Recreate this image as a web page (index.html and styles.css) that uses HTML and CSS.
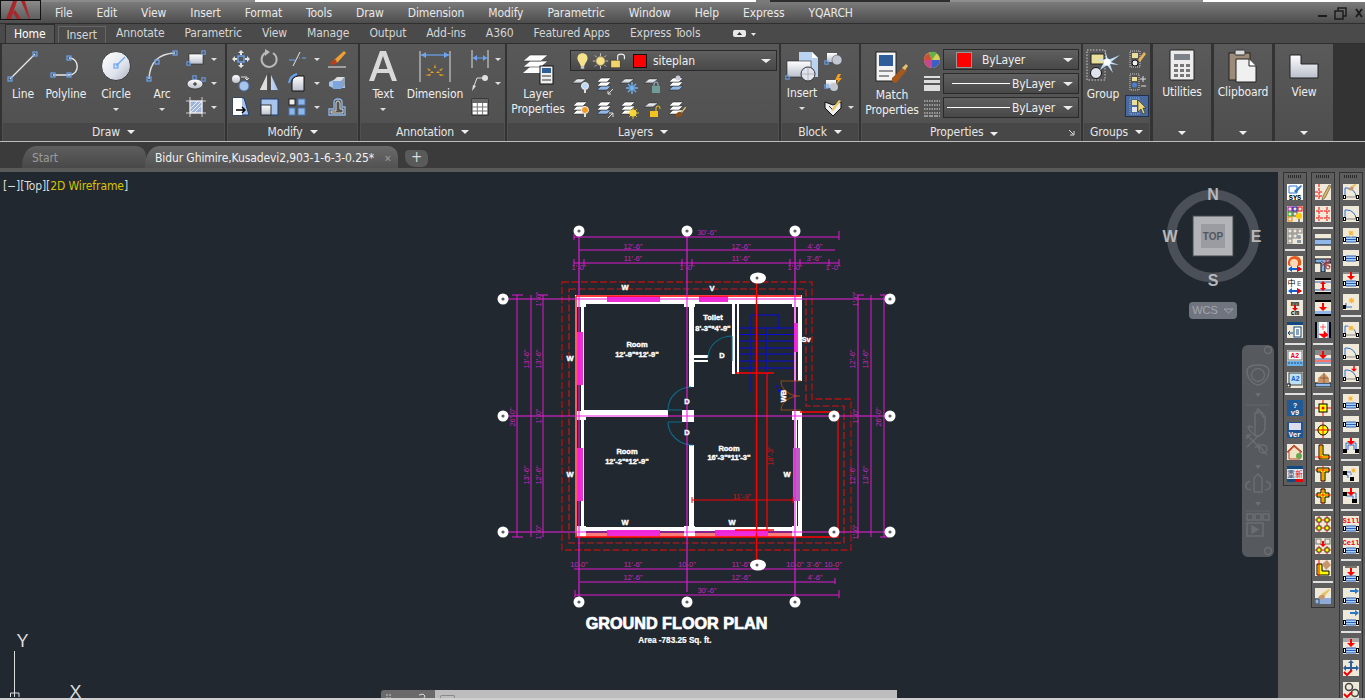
FILE: index.html
```html
<!DOCTYPE html>
<html lang="en">
<head>
<meta charset="utf-8">
<title>AutoCAD - Ground Floor Plan</title>
<link rel="stylesheet" href="styles.css">
</head>
<body>
<svg class="defs" aria-hidden="true">
  <defs>
    <linearGradient id="gw" x1="0" y1="0" x2="0" y2="1"><stop offset="0" stop-color="#fff"/><stop offset="1" stop-color="#b9bfcb"/></linearGradient>
    <linearGradient id="gc" x1="0" y1="0" x2="1" y2="1"><stop offset="0" stop-color="#fff"/><stop offset=".6" stop-color="#dfe3ec"/><stop offset="1" stop-color="#aab0bf"/></linearGradient>
    <linearGradient id="gb" x1="0" y1="0" x2="1" y2="0"><stop offset="0" stop-color="#fff"/><stop offset="1" stop-color="#9fc0ea"/></linearGradient>
  </defs>
  <symbol id="h" viewBox="0 0 6 6" overflow="visible"><rect x="1" y="1" width="4" height="4" fill="none" stroke="#6aa5f5" stroke-width="1.2"/></symbol>
  <symbol id="sheet" viewBox="0 0 20 20" overflow="visible"><polygon points="1,8 6,4 15,4 10,8" fill="url(#gw)" stroke="#222" stroke-width=".5"/></symbol>
  <symbol id="stack" viewBox="0 0 20 20" overflow="visible"><polygon points="2,15 6,11 16,11 12,15" fill="#fff" stroke="#222" stroke-width=".5"/><polygon points="2,11 6,7 16,7 12,11" fill="#fff" stroke="#222" stroke-width=".5"/><polygon points="2,7 6,3 16,3 12,7" fill="#fff" stroke="#222" stroke-width=".5"/></symbol>
  <symbol id="stackb" viewBox="0 0 20 20" overflow="visible"><polygon points="2,15 6,11 16,11 12,15" fill="#8fb7e8" stroke="#222" stroke-width=".5"/><polygon points="2,11 6,7 16,7 12,11" fill="#fff" stroke="#222" stroke-width=".5"/><polygon points="2,7 6,3 16,3 12,7" fill="#fff" stroke="#222" stroke-width=".5"/></symbol>
  <symbol id="brush" viewBox="0 0 16 16" overflow="visible"><path d="M9 8 14 2l1 1-5 6z" fill="#e9c46a"/><path d="M3 13c0-3 3-6 6-5l2 2c0 3-4 5-8 3z" fill="#8a4f1d"/></symbol>
  <symbol id="bub" viewBox="-7 -7 14 14" overflow="visible"><circle r="6.2" fill="#fff"/><circle r="1.8" fill="#5a5f66"/></symbol>
  <symbol id="winb" viewBox="0 0 16 16"><rect x="3" y="6" width="10" height="5" fill="#a9d0f5"/><path d="M3 6h10M3 8.5h10M3 11h10" stroke="#2c5fb3"/><rect x="0" y="6" width="3" height="5" fill="#000"/><rect x="13" y="6" width="3" height="5" fill="#000"/><rect x="1" y="7" width="1" height="3" fill="#fff"/><rect x="14" y="7" width="1" height="3" fill="#fff"/></symbol>
  <symbol id="doorb" viewBox="0 0 16 16"><path d="M2 13V4h2a9 9 0 0 1 9 9" fill="none" stroke="#2c6fd1"/><path d="M3 13h10" stroke="#888"/><rect x="0" y="11" width="3" height="4" fill="#000"/><rect x="13" y="11" width="3" height="4" fill="#000"/><rect x="1" y="12" width="1" height="2" fill="#fff"/><rect x="14" y="12" width="1" height="2" fill="#fff"/></symbol>
  <symbol id="star" viewBox="0 0 16 16"><path d="M8 1l1 4 4-2-2 4 4 1-4 1 2 4-4-2-1 4-1-4-4 2 2-4-4-1 4-1-2-4 4 2z" fill="#f6b73c" stroke="#fff" stroke-width=".6"/></symbol>
  <symbol id="rdown" viewBox="0 0 16 16"><path d="M7 1h2v4h3L8 9 4 5h3z" fill="#f00"/></symbol>
  <symbol id="rcross" viewBox="0 0 16 16"><path d="M8 0v16M0 8h16" stroke="#f00"/></symbol>
  <symbol id="brt" viewBox="0 0 16 16"><path d="M6 6 14 1l1 1-6 7z" fill="#e6c468"/><path d="M3 10c1-3 4-4 6-3l1 2c-1 3-5 3-7 1z" fill="#c9956b"/></symbol>
</svg>

<div class="topstrip"><span class="s1"></span><span class="s2"></span><span class="s3"></span><span class="s4"></span><span class="s5"></span></div>

<header class="menubar">
  <div class="appbtn"><svg viewBox="0 0 40 18" width="40" height="18"><path d="M5 18 12 0h4L10 18zM28 18 20 0h4l5 18zM14 9l6 9h-4l-4-6z" fill="#a8272b"/></svg></div>
  <nav class="menu">
    <span>File</span><span>Edit</span><span>View</span><span>Insert</span><span>Format</span><span>Tools</span><span>Draw</span><span>Dimension</span><span>Modify</span><span>Parametric</span><span>Window</span><span>Help</span><span>Express</span><span>YQARCH</span>
  </nav>
  <div class="winctl">
    <svg width="48" height="14" viewBox="0 0 48 14"><path d="M0 10h9" stroke="#1c1c1c" stroke-width="2"/><path d="M17 5h8v8h-8zM20 5V2h8v8h-3" fill="none" stroke="#1c1c1c" stroke-width="1.5"/><path d="M38 3l6 8M44 3l-6 8" stroke="#1c1c1c" stroke-width="2"/></svg>
  </div>
</header>

<div class="tabrow">
  <span class="rtab active">Home</span>
  <span class="rtab boxed">Insert</span>
  <span class="rtab">Annotate</span>
  <span class="rtab">Parametric</span>
  <span class="rtab">View</span>
  <span class="rtab">Manage</span>
  <span class="rtab">Output</span>
  <span class="rtab">Add-ins</span>
  <span class="rtab">A360</span>
  <span class="rtab">Featured Apps</span>
  <span class="rtab">Express Tools</span>
  <span class="tabmin"><svg width="24" height="8" viewBox="0 0 24 8"><rect x="0" y="0" width="13" height="7" rx="2" fill="#e8e8e8"/><path d="M4 5l2.500-3 2.500 3z" fill="#333"/><path d="M18 3h5l-2.500 3z" fill="#e8e8e8"/></svg></span>
</div>

<section class="ribbon">
  <div class="panel p-draw">
    <div class="body">
      <div class="tool"><svg class="big" viewBox="0 0 34 34"><path d="M4 30 29 5" stroke="#e8e8e8" stroke-width="1.2"/><use href="#h" x="1" y="27" width="6" height="6"/><use href="#h" x="26" y="2" width="6" height="6"/></svg><span>Line</span></div>
      <div class="tool"><svg class="big" viewBox="0 0 34 34"><path d="M4 26H20M20 9c11 0 11 17 0 17" fill="none" stroke="#e8e8e8" stroke-width="1.4"/><use href="#h" x="1" y="23" width="6" height="6"/><use href="#h" x="17" y="23" width="6" height="6"/><use href="#h" x="17" y="6" width="6" height="6"/></svg><span>Polyline</span></div>
      <div class="tool"><svg class="big" viewBox="0 0 34 34"><circle cx="17" cy="17" r="14.500" fill="url(#gc)" stroke="#222" stroke-width=".8"/><path d="M17 17 26 8" stroke="#6aa5f5" stroke-width="1.2"/><use href="#h" x="14" y="14" width="6" height="6"/></svg><span>Circle</span><i class="dn"></i></div>
      <div class="tool"><svg class="big" viewBox="0 0 34 34"><path d="M4 30Q5 5 30 4" fill="none" stroke="#ddd" stroke-width="1.4"/><use href="#h" x="1" y="27" width="6" height="6"/><use href="#h" x="9" y="10" width="6" height="6"/><use href="#h" x="27" y="1" width="6" height="6"/></svg><span>Arc</span><i class="dn"></i></div>
      <div class="smalls">
        <div class="srow"><svg class="ic" viewBox="0 0 20 20"><rect x="3" y="5" width="14" height="10" fill="url(#gw)" stroke="#222" stroke-width=".6"/><use href="#h" x="0" y="12" width="5" height="5"/><use href="#h" x="15" y="1" width="5" height="5"/></svg><i class="dn"></i></div>
        <div class="srow"><svg class="ic" viewBox="0 0 20 20"><ellipse cx="9" cy="11" rx="8" ry="5" fill="url(#gw)" stroke="#222" stroke-width=".6"/><path d="M7 11h4M9 9v4" stroke="#222"/><use href="#h" x="6" y="2" width="5" height="5"/><use href="#h" x="15" y="4" width="5" height="5"/></svg><i class="dn"></i></div>
        <div class="srow"><svg class="ic" viewBox="0 0 20 20"><rect x="4" y="4" width="12" height="12" fill="#9fb4da" stroke="#eee"/><path d="M4 16 16 4M4 12l8-8M8 16l8-8" stroke="#fff" stroke-width=".8"/><path d="M0 4h20M0 16h20M4 0v20M16 0v20" stroke="#eee" stroke-width=".8"/></svg><i class="dn"></i></div>
      </div>
    </div>
    <div class="ptitle">Draw <i class="dnw"></i></div>
  </div>

  <div class="panel p-modify">
    <div class="body">
      <div class="mgrid">
        <svg class="ic" viewBox="0 0 20 20"><path d="M10 1l3 3h-2v2H9V4H7zM10 19l-3-3h2v-2h2v2h2zM1 10l3-3v2h2v2H4v2zM19 10l-3 3v-2h-2V9h2V7z" fill="#e4e4e4"/><rect x="7" y="7" width="6" height="6" fill="none" stroke="#6aa5f5" stroke-width="1.4"/></svg>
        <svg class="ic" viewBox="0 0 20 20"><path d="M14 4a7.500 7.500 0 1 1-6-.8" fill="none" stroke="#bbb" stroke-width="2"/><path d="M6 0l5 3-5 4z" fill="#bbb"/></svg>
        <div class="mcell"><svg class="ic" viewBox="0 0 20 20"><path d="M2 11h6M12 9h1M15 9h4" stroke="#6aa5f5" stroke-width="1.200"/><path d="M6 17 13 3" stroke="#e8e8e8"/></svg><i class="dn"></i></div>
        <svg class="ic" viewBox="0 0 20 20"><path d="M7 11 17 2l2 2-9 10z" fill="#f0a030"/><path d="M3 15c1-3 4-5 6-4l1 3c-2 2-5 2-7 1z" fill="#b5421c"/><path d="M1 18h18" stroke="#e8e8e8"/></svg>
        <svg class="ic" viewBox="0 0 20 20"><circle cx="5" cy="6" r="4" fill="url(#gw)"/><circle cx="13" cy="13" r="5" fill="#a9c4ea" stroke="#4d76b3"/><path d="M10 4h6v3M14 5l2 2 2-2" fill="none" stroke="#ddd"/></svg>
        <svg class="ic" viewBox="0 0 20 20"><path d="M8 2v15H1zM12 2v15h7z" fill="url(#gb)"/><path d="M8 2v15H1z" fill="#ddd"/><path d="M10 0v20" stroke="#444"/></svg>
        <div class="mcell"><svg class="ic" viewBox="0 0 20 20"><path d="M5 18V9q0-5 6-6h6v15z" fill="url(#gw)" stroke="#111"/><path d="M2 10Q3 3 10 1" fill="none" stroke="#6aa5f5" stroke-width="2"/></svg><i class="dn"></i></div>
        <svg class="ic" viewBox="0 0 20 20"><path d="M2 9l7-3 9 0v9H6l-4-2z" fill="#a9c4ea"/><rect x="6" y="8" width="8" height="8" fill="#7fa6dc"/><path d="M6 8l4-4h8l-4 4z" fill="#ddd"/><path d="M14 8l4-4v8l-4 4z" fill="#8fa0b8"/></svg>
        <svg class="ic" viewBox="0 0 20 20"><path d="M2 1h11l5 17H2z" fill="#a9c4ea" stroke="#1c3f75"/><rect x="2" y="1" width="9" height="17" fill="#fff"/><path d="M5 13h9M11 10l3 3-3 3" stroke="#000" stroke-width="1.4" fill="none"/></svg>
        <svg class="ic" viewBox="0 0 20 20"><rect x="2" y="2" width="17" height="16" fill="#a9c4ea" stroke="#1c3f75"/><rect x="2" y="8" width="10" height="10" fill="url(#gw)" stroke="#333"/></svg>
        <div class="mcell"><svg class="ic" viewBox="0 0 20 20"><rect x="2" y="2" width="6" height="6" fill="#eee" stroke="#222"/><rect x="11" y="2" width="7" height="6" fill="#8fb7e8" stroke="#4d76b3"/><rect x="2" y="11" width="6" height="7" fill="#8fb7e8" stroke="#4d76b3"/><rect x="11" y="11" width="7" height="7" fill="#8fb7e8" stroke="#4d76b3"/></svg><i class="dn"></i></div>
        <svg class="ic" viewBox="0 0 20 20"><path d="M2 18v-6h5V5q0-3 4-3t4 3v5h3v8z" fill="none" stroke="#8fb7e8" stroke-width="1.300"/><path d="M4 16v-2h5V6q0-2 2-2t2 2v6h3v4z" fill="none" stroke="#ddd"/></svg>
      </div>
    </div>
    <div class="ptitle">Modify <i class="dnw"></i></div>
  </div>

  <div class="panel p-annot">
    <div class="body">
      <div class="tool"><svg class="big" viewBox="0 0 34 34"><path d="M3 32 14 2h6l11 30h-5l-3-8H11l-3 8zM12.500 20h9L17 7z" fill="#d9d9d9" fill-rule="evenodd"/></svg><span>Text</span><i class="dn"></i></div>
      <div class="tool"><svg class="big" viewBox="0 0 34 34"><path d="M2 2v31M32 2v31" stroke="#ddd"/><path d="M3 6h28" stroke="#6aa5f5" stroke-width="1.200"/><path d="M3 6l5-3v6zM31 6l-5-3v6z" fill="#6aa5f5"/><path d="M17 15l-1 4h2zM9 19l2 3 2-1zM25 19l-2 3-2-1zM7 26l6-1-1 2zM27 26l-6-1 1 2zM14 22l-2 2h4zM20 22l2 2h-4z" fill="#f1a11e"/></svg><span>Dimension</span></div>
      <div class="smalls">
        <div class="srow"><svg class="ic" viewBox="0 0 20 20"><path d="M2 1v18M18 1v18" stroke="#ddd"/><path d="M3 9h14" stroke="#6aa5f5"/><path d="M3 9l4-3v6zM17 9l-4-3v6z" fill="#6aa5f5"/></svg><i class="dn"></i></div>
        <div class="srow"><svg class="ic" viewBox="0 0 20 20"><circle cx="15" cy="5" r="3" fill="#e0e0e0"/><path d="M12 5H7l-3 8" fill="none" stroke="#ddd"/><path d="M2 18l1-6 3 1z" fill="#ddd"/></svg><i class="dn"></i></div>
        <div class="srow"><svg class="ic" viewBox="0 0 20 20"><rect x="2" y="2" width="16" height="16" fill="#fff" stroke="#222"/><rect x="2" y="2" width="16" height="4" fill="#666"/><path d="M7.300 6v12M12.600 6v12M2 10h16M2 14h16" stroke="#777"/></svg></div>
      </div>
    </div>
    <div class="ptitle">Annotation <i class="dnw"></i></div>
  </div>

  <div class="panel p-layers">
    <div class="body">
      <div class="tool twoline"><svg class="big" viewBox="0 0 34 34"><polygon points="2,22 9,16 27,16 20,22" fill="#fff"/><polygon points="2,16 9,10 27,10 20,16" fill="#fff" stroke="#333" stroke-width=".6"/><polygon points="2,10 9,4 27,4 20,10" fill="#fff" stroke="#333" stroke-width=".6"/><rect x="19" y="15" width="13" height="18" fill="#f0f0f0" stroke="#111"/><rect x="21" y="17" width="9" height="5" fill="#2f5d99"/><path d="M21 25h9M21 29h9" stroke="#333"/></svg><span>Layer<br>Properties</span></div>
      <div class="layerside">
        <div class="combo layercombo">
          <svg class="lyrico" viewBox="0 0 20 20"><path d="M10 1c4 0 6 3 6 6 0 3-3 5-4 9H8C7 12 4 10 4 7c0-3 2-6 6-6z" fill="#f6e28a"/><rect x="8" y="16" width="4" height="3" fill="#ccc"/></svg>
          <svg class="lyrico" viewBox="0 0 20 20"><circle cx="10" cy="10" r="5" fill="#f6e28a" stroke="#c9b265"/><path d="M10 1v3M10 16v3M1 10h3M16 10h3M3.500 3.500l2 2M14.500 14.500l2 2M3.500 16.500l2-2M14.500 5.500l2-2" stroke="#ddd"/></svg>
          <svg class="lyrico" viewBox="0 0 20 20"><rect x="1" y="9" width="11" height="9" fill="#f0d46a" stroke="#222" stroke-width=".6"/><path d="M9 9V5q0-3 4-3t4 3v3" fill="none" stroke="#eee" stroke-width="1.400"/></svg>
          <span class="redchip"></span><span class="lname">siteplan</span><i class="dnc"></i>
        </div>
        <div class="lgrid">
          <svg class="lic" viewBox="0 0 20 20"><use href="#sheet" width="20" height="20"/><circle cx="14" cy="11" r="3.500" fill="#bcd8f5" stroke="#eee"/><path d="M14 14v4" stroke="#ddd" stroke-width="2"/></svg>
          <svg class="lic" viewBox="0 0 20 20"><use href="#stackb" width="20" height="20"/><path d="M18 14l-5 5M13 16v3h3" fill="none" stroke="#ddd"/></svg>
          <svg class="lic" viewBox="0 0 20 20"><use href="#sheet" width="20" height="20"/><path d="M13 7v12M7 13h12M9 9l8 8M17 9l-8 8" stroke="#6fb0f2" stroke-width="1.400"/></svg>
          <svg class="lic" viewBox="0 0 20 20"><use href="#sheet" width="20" height="20"/><rect x="9" y="11" width="8" height="7" fill="#6f9c96"/><path d="M11 11V9q0-2 2-2t2 2v2" fill="none" stroke="#9bc"/></svg>
          <svg class="lic" viewBox="0 0 20 20"><use href="#stackb" width="20" height="20"/><circle cx="11" cy="3" r="2.500" fill="#ccd"/></svg>
          <svg class="lic" viewBox="0 0 20 20"><use href="#stack" width="20" height="20"/><circle cx="14" cy="11" r="3.500" fill="#f29a1e" stroke="#eee"/><path d="M14 14v4" stroke="#ddd" stroke-width="2"/></svg>
          <svg class="lic" viewBox="0 0 20 20"><use href="#stackb" width="20" height="20"/><path d="M13 19l5-5M14 14h4v4" fill="none" stroke="#ddd"/></svg>
          <svg class="lic" viewBox="0 0 20 20"><use href="#stack" width="20" height="20"/><circle cx="14" cy="14" r="3.500" fill="#f6d43a"/><path d="M14 8v12M8 14h12M10 10l8 8M18 10l-8 8" stroke="#f6d43a" stroke-width=".8"/></svg>
          <svg class="lic" viewBox="0 0 20 20"><use href="#sheet" width="20" height="20"/><rect x="7" y="12" width="8" height="6" fill="#f2c21e"/><path d="M13 12V9q0-2 2-2t2 2v1" fill="none" stroke="#f2c21e"/></svg>
          <svg class="lic" viewBox="0 0 20 20"><use href="#stack" width="20" height="20"/><use href="#brush" x="6" y="6" width="14" height="14"/></svg>
        </div>
      </div>
    </div>
    <div class="ptitle">Layers <i class="dnw"></i></div>
  </div>

  <div class="panel p-block">
    <div class="body">
      <div class="tool"><svg class="big" viewBox="0 0 34 34"><path d="M14 3h13l6 6v19H14z" fill="#b8d2f0"/><path d="M27 3l6 6h-6z" fill="#fff"/><rect x="2" y="12" width="24" height="16" fill="url(#gw)" stroke="#222" stroke-width=".6"/><circle cx="23" cy="25" r="7" fill="#dfe3ec" stroke="#333"/><path d="M23 18v14M16 25h14" stroke="#888" stroke-width=".5"/><use href="#h" x="0" y="26" width="5" height="5"/></svg><span>Insert</span><i class="dn"></i></div>
      <div class="smalls">
        <div class="srow"><svg class="ic" viewBox="0 0 20 20"><rect x="4" y="4" width="10" height="9" fill="url(#gw)"/><circle cx="14" cy="11" r="5" fill="#c2c7d2" stroke="#444" stroke-width=".5"/><use href="#h" x="1" y="11" width="5" height="5"/></svg><span class="sp"></span></div>
        <div class="srow"><svg class="ic" viewBox="0 0 20 20"><rect x="3" y="7" width="10" height="8" fill="url(#gw)"/><circle cx="11" cy="14" r="4" fill="#c2c7d2"/><path d="M15 1l-3 6h3l-2 5 6-7h-3l2-4z" fill="#f1a11e"/><use href="#h" x="1" y="11" width="5" height="5"/></svg><span class="sp"></span></div>
        <div class="srow"><svg class="ic" viewBox="0 0 20 20"><path d="M2 5l8 3 8-3v6l-8 8-8-8z" fill="#eee" stroke="#111"/><path d="M8 13 16 3l2 1-8 10z" fill="#e8c55f"/><path d="M6 9l3 3" stroke="#333"/></svg><i class="dn"></i></div>
      </div>
    </div>
    <div class="ptitle">Block <i class="dnw"></i></div>
  </div>

  <div class="panel p-props">
    <div class="body">
      <div class="tool twoline"><svg class="big" viewBox="0 0 34 34"><rect x="1" y="1" width="20" height="29" fill="#f4f4f4" stroke="#222"/><rect x="4" y="4" width="14" height="11" fill="#2f5d99"/><path d="M4 20h14M4 25h10" stroke="#333"/><path d="M17 27 29 16l3 3-10 12c-3 2-6-1-5-4z" fill="#a5591f"/><path d="M27 17l4-4 2 2-3 4z" fill="#e3c26a"/></svg><span>Match<br>Properties</span></div>
      <div class="propic">
        <svg class="ic" viewBox="0 0 20 20"><circle cx="10" cy="10" r="8" fill="#d7d052"/><path d="M10 10 18 10A8 8 0 0 1 10 18z" fill="#3c5ec7"/><path d="M10 10V18A8 8 0 0 1 2 10z" fill="#c8478a"/><path d="M10 10H2A8 8 0 0 1 7 3z" fill="#d44b3a"/><path d="M10 10 7 3A8 8 0 0 1 15 3z" fill="#63b14c"/></svg>
        <svg class="ic" viewBox="0 0 20 20"><rect x="2" y="2" width="16" height="2" fill="#ddd"/><rect x="2" y="6" width="16" height="3" fill="#ddd"/><rect x="2" y="11" width="16" height="6" fill="#ddd"/></svg>
        <svg class="ic" viewBox="0 0 20 20"><path d="M2 3h16M2 7h16M2 11h16M2 15h16" stroke="#ddd" stroke-dasharray="1.500 1"/><path d="M2 18h16" stroke="#ddd" stroke-dasharray="4 1"/></svg>
      </div>
      <div class="pcombos">
        <div class="combo pc1"><span class="redchip outlined"></span><span class="cname">ByLayer</span><i class="dnc"></i></div>
        <div class="combo pc2"><span class="wline l1"></span><span class="cname">ByLayer</span><i class="dnc"></i></div>
        <div class="combo pc3"><span class="wline l2"></span><span class="cname">ByLayer</span><i class="dnc"></i></div>
      </div>
    </div>
    <div class="ptitle props-title"><span class="centered">Properties <i class="dnw"></i></span><svg class="launch" width="7" height="7" viewBox="0 0 7 7"><path d="M1 1l4.500 4.500M6 2v4H2" fill="none" stroke="#ddd"/></svg></div>
  </div>

  <div class="panel p-groups">
    <div class="body">
      <div class="tool"><svg class="big" viewBox="0 0 34 34"><rect x="1" y="1" width="18" height="30" fill="none" stroke="#ccc" stroke-dasharray="1.500 1.500"/><rect x="5" y="5" width="13" height="10" fill="#e9df9a" stroke="#222"/><circle cx="10" cy="24" r="5.500" fill="#dfe3ec" stroke="#111"/><path d="M22 11 34 6 25 13 33 16 24 15 27 24 21 16 14 21 18 13 10 10 20 11 19 1z" fill="#bfe1ff"/><circle cx="21" cy="13" r="3.500" fill="#fff"/></svg><span>Group</span></div>
      <div class="gsmalls">
        <svg class="ic" viewBox="0 0 20 20"><rect x="3" y="2" width="10" height="16" fill="none" stroke="#ccc" stroke-dasharray="1 1"/><rect x="5" y="4" width="6" height="5" fill="#e9df9a"/><circle cx="8" cy="14" r="3" fill="#eee" stroke="#111"/><path d="M11 11 17 3l2 2-6 8z" fill="#e6b45a"/></svg>
        <svg class="ic" viewBox="0 0 20 20"><rect x="3" y="2" width="9" height="16" fill="none" stroke="#ccc" stroke-dasharray="1 1"/><rect x="5" y="5" width="5" height="4" fill="#e9df9a"/><circle cx="7.500" cy="13" r="2.500" fill="#4b7fcf"/><path d="M13 7h6M16 4v6M14 14h5" stroke="#ddd"/></svg>
        <span class="gsel"><svg class="ic" viewBox="0 0 20 20"><rect x="3" y="2" width="9" height="16" fill="none" stroke="#7fb0f2" stroke-dasharray="1 1"/><rect x="5" y="4" width="5" height="5" fill="#e9df9a"/><rect x="5" y="11" width="5" height="5" fill="#dfe3ec"/><path d="M11 4v12l3-3 2 5 2-1-2-5h3z" fill="#ecd67a" stroke="#111" stroke-width=".5"/></svg></span>
      </div>
    </div>
    <div class="ptitle">Groups <i class="dnw"></i></div>
  </div>

  <div class="panel slim">
    <svg class="big" viewBox="0 0 34 34"><rect x="5" y="1" width="24" height="30" rx="1" fill="#ececec" stroke="#222"/><rect x="9" y="5" width="16" height="6" fill="#7c8288"/><path d="M9 15h4v3H9zM15 15h4v3h-4zM21 15h4v3h-4zM9 20h4v3H9zM15 20h4v3h-4zM21 20h4v3h-4zM9 25h4v3H9zM15 25h4v3h-4zM21 25h4v3h-4z" fill="#777"/></svg>
    <span class="slimlabel">Utilities</span><i class="dnw bottom"></i>
  </div>
  <div class="panel slim">
    <svg class="big" viewBox="0 0 34 34"><rect x="3" y="4" width="21" height="27" fill="#9b8b78" stroke="#222"/><rect x="9" y="1" width="10" height="5" rx="1" fill="#dcdcdc" stroke="#333"/><path d="M10 10h13l7 7v16H10z" fill="#f0f0f0" stroke="#222"/><path d="M23 10v7h7" fill="#fff" stroke="#222"/></svg>
    <span class="slimlabel">Clipboard</span><i class="dnw bottom"></i>
  </div>
  <div class="panel slim">
    <svg class="big" viewBox="0 0 34 34"><path d="M3 6h11v9h17v14H3z" fill="url(#gw)" stroke="#222"/></svg>
    <span class="slimlabel">View</span><i class="dnw bottom"></i>
  </div>
</section>

<div class="docstrip">
  <div class="dtab start">Start</div>
  <div class="dtab current">Bidur Ghimire,Kusadevi2,903-1-6-3-0.25*<span class="dclose">&#10005;</span></div>
  <div class="dtab plus">+</div>
</div>

<main class="work">
  <div class="canvas">
    <svg class="model" viewBox="0 172 1278 526" width="1278" height="526">
      <!-- red dashed setbacks -->
      <path class="dash1" d="M562 282H812V399H851V550H562Z"/>
      <path class="dash2" d="M569 289H806V406H844V543H569Z"/>

      <!-- walls -->
      <g fill="#fff">
        <rect x="575" y="295" width="227" height="9"/>
        <rect x="575" y="295" width="2" height="242"/>
        <rect x="581" y="303" width="3" height="226"/>
        <rect x="794" y="303" width="2" height="78"/>
        <rect x="798" y="295" width="4" height="86"/>
        <rect x="794" y="413" width="3" height="118"/>
        <rect x="798" y="413" width="4" height="124"/>
        <rect x="583" y="410" width="85" height="7"/>
        <rect x="682" y="410" width="12" height="12"/>
        <rect x="689" y="303" width="5" height="84"/>
        <rect x="689" y="445" width="5" height="90"/>
        <rect x="694" y="355" width="14" height="3"/>
        <rect x="694" y="360" width="14" height="2"/>
        <rect x="732" y="303" width="3" height="71"/>
        <rect x="737" y="303" width="2" height="71"/>
        <rect x="575" y="527" width="227" height="4"/>
        <rect x="575" y="533" width="227" height="4" fill="#ff7b7b"/>
        <rect x="577" y="295" width="9" height="12"/><rect x="684" y="295" width="11" height="12"/><rect x="792" y="295" width="10" height="12"/>
        <rect x="577" y="411" width="9" height="9"/><rect x="792" y="411" width="10" height="9"/>
        <rect x="577" y="526" width="9" height="11"/><rect x="684" y="526" width="11" height="11"/><rect x="792" y="526" width="10" height="11"/>
      </g>

      <!-- windows -->
      <g fill="#f02cd6">
        <rect x="607" y="296" width="53" height="6"/><rect x="699" y="296" width="29" height="6"/>
        <rect x="577" y="332" width="6" height="53"/><rect x="794" y="323" width="4" height="29"/>
        <rect x="577" y="448" width="6" height="53"/><rect x="793" y="448" width="7" height="53" fill="#c05ac8"/>
        <rect x="607" y="530" width="53" height="6"/><rect x="715" y="530" width="53" height="6"/>
      </g>

      <!-- stair -->
      <g class="blue">
        <path d="M739 328H794M739 334.500H794M739 341H794M739 348H794M739 354H794M739 361H794M739 368H794M751 392V315H779V330M766 328V380M776 385l3.500 8 3.500-8"/>
      </g>

      <!-- doors -->
      <g class="teal">
        <path d="M732 336V361M732 336A24 22 0 0 0 708 358M691 387A23 23 0 0 0 668 410H682M668 422H682M668 422A25 23 0 0 0 693 445"/>
      </g>
      <path class="brown" d="M801 381H781A19 15 0 0 0 800 396A19 14 0 0 0 781 410H801"/>

      <!-- red lines -->
      <g class="redl">
        <path d="M576 296H801M576 296V537H838V412H800"/>
        <path d="M756.500 280V565M767 373V530M735 373H774M735 530H774"/>
        <path class="thin" d="M692 500H793M692 497v6M793 497v6"/>
      </g>
      <text class="rt" x="742" y="499">11'-9"</text>
      <text class="rt" transform="translate(773 456) rotate(-90)">18'-3"</text>

      <!-- dimension lines -->
      <g class="mag">
        <path d="M503 299H890M503 416H890M503 532H890M579 231V602M687 231V592M795 231V602"/>
        <path class="thin" d="M574 237H839M839 231v9M574 234v6M579 250H835M574 263H839M574 259v7M584 259v7M682 259v7M692 259v7M790 259v7M800 259v7M829 259v7M839 259v7"/>
        <path class="thin" d="M574 569H839M580 582H835M575 595H839M575 590v8M839 590v8M835 578v6"/>
        <path class="thin" d="M517 295V537M531 295V537M543 295V537M858 295V537M871 295V537M884 295V537M512 295H523M512 537H523M538 295H548M858 295H864M880 295H889M880 537H889"/>
      </g>

      <g class="dim">
        <text x="707" y="235">30'-6"</text><text x="633" y="249">12'-6"</text><text x="741" y="249">12'-6"</text><text x="815" y="249">4'-6"</text>
        <text x="633" y="261">11'-6"</text><text x="741" y="261">11'-6"</text><text x="814" y="261">3'-6"</text>
        <text x="579" y="270">1'-0"</text><text x="687" y="270">1'-0"</text><text x="795" y="270">1'-0"</text><text x="833" y="270">1'-0"</text>
        <text x="579" y="567">10-0"</text><text x="633" y="567">11'-6"</text><text x="687" y="567">10-0"</text><text x="741" y="567">11'-6"</text><text x="795" y="567">10-0"</text><text x="814" y="567">3'-6"</text><text x="833" y="567">10-0"</text>
        <text x="633" y="580">12'-6"</text><text x="741" y="580">12'-6"</text><text x="815" y="580">4'-6"</text>
        <text x="707" y="593">30'-6"</text>
        <text transform="translate(529 359) rotate(-90)">13'-6"</text><text transform="translate(541 359) rotate(-90)">13'-6"</text>
        <text transform="translate(529 475) rotate(-90)">13'-6"</text><text transform="translate(541 475) rotate(-90)">12'-6"</text>
        <text transform="translate(541 299) rotate(-90)">1'-0"</text><text transform="translate(541 416) rotate(-90)">1'-0"</text><text transform="translate(541 532) rotate(-90)">1'-0"</text>
        <text transform="translate(515 417) rotate(-90)">26'-0"</text>
        <text transform="translate(855 359) rotate(-90)">12'-6"</text><text transform="translate(868 359) rotate(-90)">13'-6"</text>
        <text transform="translate(855 475) rotate(-90)">12'-6"</text><text transform="translate(868 475) rotate(-90)">13'-6"</text>
        <text transform="translate(858 299) rotate(-90)">1'-0"</text><text transform="translate(858 416) rotate(-90)">1'-0"</text><text transform="translate(858 532) rotate(-90)">1'-0"</text>
        <text transform="translate(881 417) rotate(-90)">26'-0"</text>
      </g>

      <!-- bubbles -->
      <use href="#bub" x="572.800" y="224.800" width="12.400" height="12.400"/><use href="#bub" x="680.800" y="224.800" width="12.400" height="12.400"/><use href="#bub" x="788.800" y="224.800" width="12.400" height="12.400"/>
      <use href="#bub" x="572.800" y="595.800" width="12.400" height="12.400"/><use href="#bub" x="680.800" y="595.800" width="12.400" height="12.400"/><use href="#bub" x="788.800" y="595.800" width="12.400" height="12.400"/>
      <use href="#bub" x="496.800" y="292.800" width="12.400" height="12.400"/><use href="#bub" x="496.800" y="409.800" width="12.400" height="12.400"/><use href="#bub" x="496.800" y="525.800" width="12.400" height="12.400"/>
      <use href="#bub" x="883.800" y="292.800" width="12.400" height="12.400"/><use href="#bub" x="883.800" y="409.800" width="12.400" height="12.400"/><use href="#bub" x="883.800" y="525.800" width="12.400" height="12.400"/>
      <use href="#bub" x="827.800" y="409.800" width="12.400" height="12.400"/><use href="#bub" x="827.800" y="525.800" width="12.400" height="12.400"/>
      <ellipse cx="758" cy="278" rx="8" ry="5.500" fill="#fff"/><circle cx="757" cy="278" r="1.500" fill="#5a5f66"/>
      <ellipse cx="758" cy="565" rx="8" ry="5.500" fill="#fff"/><circle cx="757" cy="565" r="1.500" fill="#5a5f66"/>

      <!-- room labels -->
      <g class="lab">
        <text x="625" y="290">W</text><text x="712" y="291">V</text>
        <text x="713" y="320">Toilet</text><text x="713" y="331">8'-3"*4'-9"</text>
        <text x="637" y="347">Room</text><text x="637" y="357">12'-9"*12'-9"</text>
        <text x="570" y="361">W</text><text x="722" y="358">D</text><text x="806" y="342">Sv</text>
        <text x="687" y="404">D</text><text x="687" y="435">D</text>
        <text x="627" y="454">Room</text><text x="627" y="464">12'-2"*12'-9"</text>
        <text x="729" y="451">Room</text><text x="729" y="460">16'-3"*11'-3"</text>
        <text x="570" y="477">W</text><text x="787" y="477">W</text><text x="625" y="525">W</text><text x="732" y="525">W</text>
        <text transform="translate(786 396) rotate(-90)">WB</text>
      </g>
      <text class="title" x="676.500" y="629">GROUND FLOOR PLAN</text>
      <text class="sub" x="675" y="643">Area -783.25 Sq. ft.</text>

      <!-- UCS -->
      <path class="ucs" d="M14.500 651V697M10.500 697V693H19V697"/>
      <text class="ucst" x="22.500" y="647">Y</text>
      <text class="ucst" x="75.500" y="698">X</text>

      <!-- view cube -->
      <circle cx="1213" cy="236" r="41.500" fill="none" stroke="#4b5058" stroke-width="9.500"/>
      <rect x="1193" y="216" width="40" height="40" fill="#b3b4b7" stroke="#44484f"/>
      <rect x="1201" y="224" width="24" height="24" fill="#9b9ca2"/>
      <text class="top" x="1213" y="240">TOP</text>
      <g class="compass">
        <text x="1213" y="200">N</text><text x="1213" y="286">S</text><text x="1256" y="242">E</text><text x="1170" y="242">W</text>
      </g>
      <rect x="1189" y="302" width="48" height="17" rx="4" fill="#70747e"/>
      <text class="wcs" x="1205" y="314">WCS</text>
      <path d="M1224 309h9l-4.500 4z" fill="none" stroke="#9fa2aa"/>
    </svg>

    <div class="ptext">[&minus;][Top][<span class="yl">2D Wireframe</span>]</div>

    <aside class="navbar">
      <svg width="32" height="212" viewBox="0 0 32 212">
        <g fill="none" stroke="#6b6f73" stroke-width="1.400">
          <circle cx="26" cy="5" r="3.500"/>
          <path d="M16 20c7 0 10 2 11 5 0 8-5 14-11 15-6-1-11-7-11-15 1-3 4-5 11-5z"/>
          <circle cx="16" cy="30" r="6.500"/>
          <path d="M13 90V69q0-2 2-1v-3q1-2 2 0v2q2-2 2 0v2q2-2 2 0v3q2-2 2 0v10q0 6-6 9h-3q-4-2-8-9 2-2 5 1"/>
          <path d="M5 90 17 102M17 90 5 102M5 90h4M5 90v4M17 102h-4M17 102v-4M18 102l7 8"/>
          <circle cx="21" cy="104" r="4"/>
          <path d="M12 147v-14l4-4 4 4v14zM8 136c-6 3-6 8 1 9M24 136c6 3 6 8-1 9"/>
          <rect x="5" y="169" width="6" height="6"/><rect x="13" y="169" width="6" height="6"/><rect x="21" y="169" width="6" height="6"/>
          <rect x="5" y="178" width="16" height="13"/><path d="M10 181l6 3.500-6 3.500z" fill="#6b6f73"/>
          <circle cx="26" cy="206" r="3.500"/>
        </g>
        <path d="M13 48h6l-3 4zM13 120h6l-3 4zM13 157h6l-3 4z" fill="#6b6f73"/>
        <path d="M4 60h24M4 166h24" stroke="#62666a"/>
      </svg>
    </aside>

    <div class="hscroll">
      <span class="grip"><svg width="54" height="8" viewBox="0 0 54 8"><path d="M5 4h2v2H5zM8 4h2v2H8zM5 7h2v1H5zM8 7h2v1H8z" fill="#9a9a9a"/><path d="M38 5l4-1 2 2-1 2" fill="none" stroke="#ddd"/></svg></span>
      <span class="track"><span class="thumb"></span></span>
    </div>
  </div>

  <aside class="rail">
    <div class="tbar">
      <div class="ti"><svg viewBox="0 0 16 16"><rect width="16" height="16" fill="#fff"/><path d="M2 2h8v7H2z" fill="none" stroke="#2a78c8"/><path d="M7 7l7-6 1 1-6 7z" fill="#2a78c8"/><text class="tt" x="8" y="15.500" font-size="7">SYS</text></svg></div>
      <div class="ti"><svg viewBox="0 0 16 16"><g fill="none" stroke-width="1"><rect x="1" y="1" width="4" height="4" stroke="#a0a"/><rect x="6" y="1" width="4" height="4" stroke="#00a"/><rect x="11" y="1" width="4" height="4" stroke="#e00"/><rect x="1" y="6" width="4" height="4" stroke="#0a0"/><rect x="6" y="6" width="4" height="4" stroke="#555"/><rect x="1" y="11" width="4" height="4" stroke="#e80"/></g><circle cx="12" cy="10" r="3" fill="#fc0"/><rect x="11" y="13" width="2" height="3" fill="#888"/></svg></div>
      <div class="ti"><svg viewBox="0 0 16 16"><g fill="none" stroke="#888"><rect x="1" y="1" width="4" height="4"/><rect x="6" y="1" width="4" height="4"/><rect x="11" y="1" width="4" height="4"/><rect x="1" y="6" width="4" height="4"/><rect x="6" y="6" width="4" height="4"/><rect x="1" y="11" width="4" height="4"/></g><circle cx="12" cy="9" r="2" fill="#89a"/><path d="M10 15v-3h4v3" fill="#89a"/></svg></div>
      <hr class="tsep">
      <div class="ti"><svg viewBox="0 0 16 16"><path d="M1 9C0 3 4 0 8 0s7 3 6 9l-2 1H3z" fill="#e85a1d"/><circle cx="7" cy="7" r="4" fill="#fcd9b8"/><path d="M1 13l4-3v2h5v-2l5 3-5 3v-2H5v2z" fill="#1060d0"/><path d="M10 10l5 3-5 3z" fill="#e00"/></svg></div>
      <div class="ti"><svg viewBox="0 0 16 16"><rect width="16" height="16" fill="#fff"/><text class="tc" x="4.500" y="8" font-size="8">中</text><text class="tt grey" x="12" y="8" font-size="8">E</text><path d="M1 13l4-3v2h5v-2l5 3-5 3v-2H5v2z" fill="#1060d0"/><path d="M10 10l5 3-5 3z" fill="#e00"/></svg></div>
      <div class="ti"><svg viewBox="0 0 16 16"><text class="tt" x="8" y="6" font-size="7">mm</text><text class="tt" x="8" y="15" font-size="7">cm</text><path d="M7 5h2v3h2l-3 3-3-3h2z" fill="#e00"/></svg></div>
      <div class="ti"><svg viewBox="0 0 16 16"><rect width="16" height="3" fill="#14497f"/><rect x="7" y="5" width="7" height="10" fill="#fff" stroke="#14497f"/><path d="M9 8h3M9 10h3M9 12h3" stroke="#14497f"/><path d="M1 11h5M3 9l-2 2 2 2" fill="none" stroke="#14497f"/></svg></div>
      <hr class="tsep">
      <div class="ti"><svg viewBox="0 0 16 16"><rect x="1" y="1" width="14" height="9" fill="#fff" stroke="#777"/><text class="tt redt" x="8" y="8" font-size="7">A2</text><rect y="11" width="16" height="5" fill="#6bb2e8"/><path d="M2 12v2M5 12v2M8 12v2M11 12v2M14 12v2" stroke="#14497f"/></svg></div>
      <div class="ti"><svg viewBox="0 0 16 16"><rect x="2" y="1" width="13" height="12" fill="#bfe0f5" stroke="#444"/><text class="tt blue2" x="8.500" y="9" font-size="7">A2</text><rect x="0" y="12" width="3" height="3" fill="#fff" stroke="#000"/></svg></div>
      <hr class="tsep">
      <div class="ti"><svg viewBox="0 0 16 16"><rect width="16" height="16" fill="#205a96"/><text class="tt white" x="8" y="8" font-size="9">?</text><text class="tt white" x="8" y="15" font-size="7">v9</text></svg></div>
      <div class="ti"><svg viewBox="0 0 16 16"><rect width="16" height="16" fill="#1d5594"/><rect x="2" y="1" width="12" height="7" fill="#dde"/><text class="tt white" x="8" y="15" font-size="7">Ver</text></svg></div>
      <div class="ti"><svg viewBox="0 0 16 16"><path d="M0 8 7 1l8 7H13v7H2V8z" fill="#f0e4c6" stroke="#c0492a"/><path d="M0 8 7 1l8 7-2 0-6-5-5 5z" fill="#c0492a"/><circle cx="12" cy="12" r="3" fill="#6aa84f"/></svg></div>
      <div class="ti"><svg viewBox="0 0 16 16"><rect width="16" height="16" fill="#dfe6ee"/><rect width="8" height="3" fill="#14497f"/><rect x="8" width="8" height="3" fill="#14497f"/><rect y="13" width="8" height="3" fill="#14497f"/><rect x="8" y="13" width="8" height="3" fill="#e00"/><text class="tc navy" x="4" y="11" font-size="7.500">重</text><text class="tc redt" x="12" y="11" font-size="7.500">新</text></svg></div>
    </div>

    <div class="tbar">
      <div class="ti"><svg viewBox="0 0 16 16"><path d="M4 0v16M0 12h8M0 8h8" stroke="#f00" stroke-dasharray="3 1"/><path d="M8 12 14 1l2 1-6 12-3 2z" fill="#e6b45a" stroke="#333" stroke-width=".5"/></svg></div>
      <div class="ti"><svg viewBox="0 0 16 16"><path d="M4 1v14M12 1v14M1 5h14M1 12h14" stroke="#f00" stroke-dasharray="3 1"/></svg></div>
      <hr class="tsep">
      <div class="ti"><svg viewBox="0 0 16 16"><rect y="5" width="16" height="6" fill="#8fb7e8"/><path d="M0 5h16M0 11h16" stroke="#000"/></svg></div>
      <div class="ti"><svg viewBox="0 0 16 16"><path d="M0 3h16v4H10v9H6V7H0z" fill="#7fb0e8" stroke="#000"/><path d="M6 10l9-5M6 5l9 6" stroke="#a33"/><circle cx="13" cy="5" r="2" fill="none" stroke="#a33"/><circle cx="13" cy="11" r="2" fill="none" stroke="#a33"/></svg></div>
      <div class="ti"><svg viewBox="0 0 16 16"><path d="M0 1h16M0 15h16" stroke="#000" stroke-width="2"/><path d="M0 4h16M0 12h16" stroke="#2c5fb3"/><path d="M8 3l3 3H9v4h2l-3 3-3-3h2V6H5z" fill="#f00"/></svg></div>
      <div class="ti"><svg viewBox="0 0 16 16"><path d="M0 1h16M0 15h16" stroke="#000" stroke-width="2"/><rect y="11" width="16" height="3" fill="#8fb7e8"/><use href="#rdown" x="0" y="2" width="16" height="16"/></svg></div>
      <div class="ti"><svg viewBox="0 0 16 16"><rect width="16" height="16" fill="#fff"/><path d="M1 0v16M15 0v16" stroke="#000" stroke-width="2"/><path d="M3 0v16M13 0v16" stroke="#2c5fb3"/><path d="M4 12h5V9l4 4-4 3zM5 5h6M8 2v6" fill="#f00" stroke="#f00" stroke-width=".6"/></svg></div>
      <hr class="tsep">
      <div class="ti"><svg viewBox="0 0 16 16"><rect y="0" width="16" height="5" fill="#888"/><path d="M0 11h16" stroke="#f00"/><path d="M0 9h16M0 13h16" stroke="#2c5fb3"/><use href="#rdown" x="0" y="0" width="16" height="16"/></svg></div>
      <div class="ti"><svg viewBox="0 0 16 16"><path d="M0 11h16v4H0z" fill="#8fb7e8" stroke="#000"/><path d="M3 11V6l6-5 5 5v5H4z" fill="#c9956b"/><path d="M9 1v10M5 6l8 0" stroke="#7b4b20" stroke-width=".7"/></svg></div>
      <hr class="tsep">
      <div class="ti"><svg viewBox="0 0 16 16"><use href="#rcross" width="16" height="16"/><rect x="4" y="4" width="8" height="8" fill="#ff0" stroke="#000"/><circle cx="8" cy="8" r="1.500" fill="#f00"/></svg></div>
      <div class="ti"><svg viewBox="0 0 16 16"><use href="#rcross" width="16" height="16"/><circle cx="8" cy="8" r="5" fill="#ff0" stroke="#000"/><path d="M8 4v8M4 8h8" stroke="#f00"/></svg></div>
      <div class="ti"><svg viewBox="0 0 16 16"><path d="M4 1v14h10V11H8V1z" fill="#ff0" stroke="#000"/><path d="M6 0v16M0 13h16" stroke="#f00" stroke-width=".8"/></svg></div>
      <div class="ti"><svg viewBox="0 0 16 16"><path d="M2 2h12v4h-4v9H6V6H2z" fill="#ff0" stroke="#000"/><path d="M8 0v16M0 4h16" stroke="#f00" stroke-width=".8"/></svg></div>
      <div class="ti"><svg viewBox="0 0 16 16"><path d="M6 1h4v4h4v4h-4v6H6V9H2V5h4z" fill="#ff0" stroke="#000"/><path d="M8 0v16M0 7h16" stroke="#f00" stroke-width=".8"/></svg></div>
      <hr class="tsep">
      <div class="ti"><svg viewBox="0 0 16 16"><path d="M4 0v16M12 0v16M0 4h16M0 12h16" stroke="#f00"/><g fill="#ff0" stroke="#000" stroke-width=".7"><rect x="2" y="2" width="4" height="4"/><rect x="10" y="2" width="4" height="4"/><rect x="2" y="10" width="4" height="4"/><rect x="10" y="10" width="4" height="4"/></g></svg></div>
      <div class="ti"><svg viewBox="0 0 16 16"><g fill="none" stroke="#777"><rect x="1" y="1" width="5" height="5"/><rect x="10" y="1" width="5" height="5"/></g><path d="M0 12h16M4 8v8M12 8v8" stroke="#f00"/><g fill="#ff0" stroke="#000" stroke-width=".7"><rect x="2" y="10" width="4" height="4"/><rect x="10" y="10" width="4" height="4"/></g><path d="M7 3h2v3h2l-3 3-3-3h2z" fill="#f00"/></svg></div>
      <div class="ti"><svg viewBox="0 0 16 16"><path d="M2 4h5v7h7v4H2z" fill="#ff0" stroke="#000"/><path d="M4 0v16" stroke="#f00"/><path d="M7 4 12 0l4 5-5 5z" fill="#c9956b"/></svg></div>
      <hr class="tsep">
      <div class="ti"><svg viewBox="0 0 16 16"><path d="M0 11h16M0 13h16M0 15h16" stroke="#2c6fd1"/><rect y="11" width="4" height="5" fill="#8fb7e8" stroke="#000" stroke-width=".6"/><use href="#brt" width="16" height="16"/></svg></div>
    </div>

    <div class="tbar tall">
      <div class="ti"><svg viewBox="0 0 16 16"><use href="#doorb" width="16" height="16"/><use href="#brt" x="3" y="-2" width="12" height="12"/></svg></div>
      <div class="ti"><svg viewBox="0 0 16 16"><use href="#doorb" width="16" height="16"/></svg></div>
      <div class="ti"><svg viewBox="0 0 16 16"><use href="#winb" y="3" width="16" height="16"/><use href="#star" x="3" y="0" width="10" height="10"/></svg></div>
      <div class="ti"><svg viewBox="0 0 16 16"><use href="#winb" width="16" height="16"/></svg></div>
      <div class="ti"><svg viewBox="0 0 16 16"><rect width="16" height="2" fill="#888"/><use href="#winb" y="3" width="16" height="16"/><use href="#rdown" x="0" y="-1" width="16" height="16"/></svg></div>
      <div class="ti"><svg viewBox="0 0 16 16"><path d="M3 13h6M3 13V9" stroke="#2c6fd1"/><rect y="11" width="3" height="4" fill="#000"/><use href="#star" x="3" y="1" width="11" height="11"/></svg></div>
      <hr class="tsep">
      <div class="ti"><svg viewBox="0 0 16 16"><use href="#doorb" width="16" height="16"/><use href="#star" x="3" y="1" width="10" height="10"/></svg></div>
      <div class="ti"><svg viewBox="0 0 16 16"><use href="#doorb" width="16" height="16"/></svg></div>
      <div class="ti"><svg viewBox="0 0 16 16"><use href="#doorb" width="16" height="16"/><use href="#rdown" x="5" y="-1" width="12" height="12"/></svg></div>
      <hr class="tsep">
      <div class="ti"><svg viewBox="0 0 16 16"><use href="#winb" y="3" width="16" height="16"/><use href="#star" x="3" y="0" width="9" height="9"/></svg></div>
      <div class="ti"><svg viewBox="0 0 16 16"><use href="#winb" width="16" height="16"/></svg></div>
      <div class="ti"><svg viewBox="0 0 16 16"><path d="M3 12V5h10v7M5 12V7h6v5" fill="none" stroke="#2c6fd1"/><rect y="11" width="4" height="4" fill="#000"/><rect x="12" y="11" width="4" height="4" fill="#000"/><use href="#rdown" x="0" y="-2" width="16" height="16"/></svg></div>
      <hr class="tsep">
      <div class="ti"><svg viewBox="0 0 16 16"><path d="M3 6h5v3M3 9h2v3" fill="none" stroke="#2c6fd1"/><rect y="5" width="4" height="4" fill="#000"/><rect x="7" y="11" width="4" height="4" fill="#000"/><use href="#star" x="6" y="0" width="9" height="9"/></svg></div>
      <div class="ti"><svg viewBox="0 0 16 16"><path d="M3 5h10v6M3 8h7v3" fill="none" stroke="#2c6fd1"/><rect y="4" width="4" height="4" fill="#000"/><rect x="9" y="11" width="5" height="4" fill="#000"/><use href="#rdown" x="0" y="-1" width="16" height="16"/></svg></div>
      <hr class="tsep">
      <div class="ti"><svg viewBox="0 0 16 16"><text class="tt redt" x="8" y="7" font-size="7.500">Sill</text><use href="#winb" y="4" width="16" height="16"/></svg></div>
      <div class="ti"><svg viewBox="0 0 16 16"><text class="tt redt" x="8" y="7" font-size="7">Ceil</text><use href="#winb" y="4" width="16" height="16"/></svg></div>
      <hr class="tsep">
      <div class="ti"><svg viewBox="0 0 16 16"><path d="M2 1h12" stroke="#000"/><use href="#winb" y="4" width="16" height="16"/><use href="#rdown" x="0" y="1" width="16" height="16"/></svg></div>
      <div class="ti"><svg viewBox="0 0 16 16"><use href="#winb" y="4" width="16" height="16"/><path d="M7 2h5V0l4 3-4 3V4H7z" fill="#2a78c8"/></svg></div>
      <div class="ti"><svg viewBox="0 0 16 16"><use href="#winb" y="4" width="16" height="16"/><path d="M7 2h5V0l4 3-4 3V4H7z" fill="#2a78c8"/></svg></div>
      <hr class="tsep">
      <div class="ti"><svg viewBox="0 0 16 16"><rect width="16" height="4" fill="#aaa"/><use href="#winb" y="4" width="16" height="16"/><use href="#rdown" x="0" y="0" width="16" height="16"/></svg></div>
      <div class="ti"><svg viewBox="0 0 16 16"><path d="M8 0l3 3H9v4h4V5l3 3-3 3V9H9v2H7V9H3v2L0 8l3-3v2h4V3H5z" fill="#2f5d99"/><path d="M1 12l3 3 5-5" fill="none" stroke="#e00" stroke-width="2"/></svg></div>
      <div class="ti"><svg viewBox="0 0 16 16"><circle cx="6" cy="5" r="3.500" fill="none" stroke="#444" stroke-width="1.500"/><circle cx="12" cy="11" r="3.500" fill="none" stroke="#444" stroke-width="1.500"/><path d="M1 12l3 3 5-5" fill="none" stroke="#e00" stroke-width="2"/></svg></div>
    </div>
  </aside>
</main>
<div class="bottomline"></div>
</body>
</html>
```

FILE: styles.css
```css
* { box-sizing: border-box; }
html, body { margin: 0; padding: 0; }
body {
  width: 1365px; height: 700px; overflow: hidden;
  background: #212830; color: #e8e8e8;
  font-family: "DejaVu Sans Condensed", "DejaVu Sans", "Noto Sans", sans-serif;
  font-stretch: condensed;
  font-size: 12px; line-height: 14px; letter-spacing: -.1px;
}
svg { display: block; flex: none; }
.defs { position: absolute; width: 0; height: 0; overflow: hidden; }

.topstrip { display: flex; height: 2px; background: #fff; }
.topstrip span { display: block; height: 2px; }
.s1 { width: 255px; background: #8a8a8a; }
.s2 { width: 501px; background: #fff; }
.s3 { width: 14px; background: #7a7a7a; }
.s4 { width: 180px; background: #2e2e2e; }
.s5 { width: 253px; background: #8f8f8f; }

.menubar {
  height: 22px; display: flex; align-items: center; padding-left: 55px;
  background: linear-gradient(#7b7b7b, #4d4d4d);
  border-bottom: 1px solid #2f2f2f; position: relative;
}
.appbtn {
  position: absolute; left: 0; top: -2px; width: 41px; height: 20px;
  background: linear-gradient(#8a8a8a, #5f5f5f); border: 1px solid #111; overflow: hidden;
}
.menu { display: flex; gap: 24px; white-space: nowrap; }
.winctl { margin-left: auto; margin-right: -1px; }

.tabrow {
  height: 20px; display: flex; align-items: flex-end; gap: 20px; padding-left: 13px;
  background: #4a4a4a; border-bottom: 1px solid #2e2e2e; position: relative; color: #d5d5d5;
}
.rtab { height: 19px; line-height: 18px; white-space: nowrap; }
.rtab.active {
  color: #fff; background: #555; margin-left: -8px; padding: 0 8px; margin-right: -17px;
  border: 1px solid #2e2e2e; border-bottom: 0;
}
.rtab.boxed { padding: 0 8px; margin-right: -10px; border: 1px solid #666; border-bottom: 0; height: 17px; line-height: 16px; }
.tabmin { align-self: center; margin-left: 12px; }

.ribbon { height: 97px; display: flex; gap: 2px; padding: 0 0 0 2px; background: #333; border-bottom: 0; }
.panel { display: flex; flex-direction: column; height: 97px; background: linear-gradient(#585858, #505050); position: relative; }
.body { height: 79px; display: flex; padding-top: 5px; }
.ptitle {
  height: 18px; background: #474747; line-height: 17px; text-align: center; color: #e6e6e6;
  display: flex; justify-content: center; align-items: center; gap: 4px; margin: 0 1px;
}
.p-draw { width: 223px; } .p-modify { width: 131px; } .p-annot { width: 145px; }
.p-layers { width: 272px; } .p-block { width: 78px; } .p-props { width: 220px; }
.p-groups { width: 67px; margin-right: 1px; }

.tool { display: flex; flex-direction: column; align-items: center; flex: none; color: #eee; white-space: nowrap; }
.tool > span { margin-top: 4px; text-align: center; line-height: 15px; }
.big { width: 34px; height: 34px; }
.dn { display: block; width: 0; height: 0; border: 3px solid transparent; border-top: 3px solid #ddd; border-bottom: 0; margin-top: 6px; }
.dnw { display: inline-block; width: 0; height: 0; border: 4px solid transparent; border-top: 4px solid #eee; border-bottom: 0; margin-left: 3px; }
.dnc { display: block; width: 0; height: 0; border: 5px solid transparent; border-top: 4px solid #eee; border-bottom: 0; margin-left: auto; }

.p-draw .tool:nth-child(1) { width: 42px; }
.p-draw .tool:nth-child(2) { width: 44px; }
.p-draw .tool:nth-child(3) { width: 56px; }
.p-draw .tool:nth-child(4) { width: 36px; }
.ic { width: 20px; height: 20px; }
.smalls { display: flex; flex-direction: column; gap: 4px; }
.srow { display: flex; align-items: center; height: 20px; gap: 5px; }
.srow .dn { margin-top: 0; }
.p-draw .smalls { margin-left: 6px; }

.mgrid { display: grid; grid-template-columns: 28px 28px 40px 20px; grid-auto-rows: 20px; row-gap: 4px; padding-left: 4px; }
.mcell { display: flex; align-items: center; gap: 7px; }
.mcell .dn { margin-top: 0; }

.p-annot .tool:nth-child(1) { width: 46px; }
.p-annot .tool:nth-child(2) { width: 58px; }
.p-annot .smalls { margin-left: 6px; }

.p-layers .tool { width: 62px; }
.tool.twoline .big { margin-top: 2px; }
.tool.twoline > span { margin-top: 2px; }
.layerside { margin-left: 1px; }
.combo {
  display: flex; align-items: center; border: 1px solid #2a2a2a; padding-right: 5px;
  background: linear-gradient(#606060, #484848);
}
.layercombo { width: 207px; height: 21px; margin-top: 1px; padding-left: 3px; gap: 1px; }
.lyrico { width: 17px; height: 18px; }
.redchip { width: 14px; height: 14px; background: #f00; border: 1px solid #111; margin-left: 5px; display: block; }
.lname { margin-left: 5px; color: #eee; }
.lgrid { display: grid; grid-template-columns: repeat(5, 24px); grid-auto-rows: 20px; row-gap: 4px; margin-top: 4px; padding-left: 1px; }
.lic { width: 20px; height: 20px; }

.p-block .tool { width: 42px; }
.p-block .tool > span { margin-top: 3px; }
.p-block .smalls { margin-left: 0; }
.sp { display: block; width: 6px; }

.p-props .tool { width: 62px; }
.p-props .tool.twoline > span { margin-top: 3px; }
.propic { display: flex; flex-direction: column; gap: 4px; padding-top: 1px; margin-left: -1px; }
.pcombos { margin-left: 1px; display: flex; flex-direction: column; }
.pcombos .combo { width: 136px; height: 21px; margin-bottom: 3px; }
.pc1 .redchip { width: 16px; height: 16px; border-color: #999; margin-left: 12px; }
.pc1 .cname { margin-left: 10px; }
.wline { display: block; height: 1px; background: #fff; }
.l1 { width: 58px; margin-left: 8px; }
.l2 { width: 63px; margin-left: 3px; }
.cname { color: #eee; margin-left: 2px; }
.props-title { position: relative; padding-right: 14px; }
.launch { position: absolute; right: 5px; top: 6px; }

.p-groups .tool { width: 40px; }
.gsmalls { display: flex; flex-direction: column; align-items: center; gap: 3px; margin-left: 2px; width: 24px; }
.gsel { display: flex; width: 24px; height: 22px; align-items: center; justify-content: center; background: #4a6a9e; border: 1px solid #20304d; }

.slim { width: 58px; align-items: center; padding-top: 5px; background: linear-gradient(#5a5a5a, #4e4e4e); margin-right: 1px; }
.slimlabel { margin-top: 2px; color: #eee; }
.dnw.bottom { position: absolute; bottom: 6px; left: 25px; margin: 0; }

.docstrip {
  height: 31px; display: flex; align-items: flex-start; padding: 4px 0 0 22px;
  background: #3b3b3b; border-top: 1px solid #bcbcbc; border-bottom: 4px solid #5a5a5a;
}
.dtab { height: 22px; line-height: 24px; white-space: nowrap; border-radius: 14px 10px 0 0 / 20px 10px 0 0; }
.start { width: 124px; padding-left: 10px; color: #9b9b9b; background: linear-gradient(#5e5e5e, #484848); }
.current { width: 253px; padding-left: 10px; color: #f2f2f2; background: linear-gradient(#6a6a6a, #525252); margin-left: -1px; }
.dclose { margin-left: 10px; color: #999; font-size: 10px; }
.plus { width: 23px; height: 17px; margin: 4px 0 0 7px; line-height: 15px; text-align: center; font-size: 15px; color: #ddd; background: #5a5a5a; border-radius: 4px 6px 6px 10px; }

.work { display: flex; height: 526px; }
.canvas { width: 1278px; height: 526px; position: relative; background: #212830; overflow: hidden; }
.model { position: absolute; left: 0; top: 0; }
.ptext { position: absolute; left: 3px; top: 7px; color: #dcdcdc; white-space: nowrap; font-size: 12px; }
.yl { color: #d8c400; }

.dash1 { fill: none; stroke: #b01212; stroke-width: 1.3; stroke-dasharray: 7 2.500; }
.dash2 { fill: none; stroke: #c61616; stroke-width: 1.2; stroke-dasharray: 7 2.500; }
.blue path { fill: none; stroke: #0a0ad6; stroke-width: 1; }
.teal path { fill: none; stroke: #0e6a8a; stroke-width: 1.100; }
.brown { fill: none; stroke: #8a4a10; stroke-width: 1.100; }
.redl path { fill: none; stroke: #f00; stroke-width: 1.300; }
.redl .thin { stroke-width: 1; }
.mag path { fill: none; stroke: #f01ee0; stroke-width: 1.100; }
.mag .thin { stroke-width: 1; stroke: #e01ad2; }
.dim text { fill: #c428bc; font: 7.500px "Liberation Sans", sans-serif; text-anchor: middle; letter-spacing: 0; }
.lab text { fill: #fff; stroke: #fff; stroke-width: .4; font: bold 7.500px "Liberation Sans", sans-serif; text-anchor: middle; letter-spacing: 0; }
.rt { fill: #d41414; font: 7.500px "Liberation Sans", sans-serif; text-anchor: middle; letter-spacing: 0; }
.title { fill: #fff; stroke: #fff; stroke-width: .7; font: bold 16.200px "Liberation Sans", sans-serif; text-anchor: middle; letter-spacing: 0; }
.sub { fill: #fff; stroke: #fff; stroke-width: .2; font: bold 8.200px "Liberation Sans", sans-serif; text-anchor: middle; letter-spacing: 0; }
.ucs { fill: none; stroke: #dcdcdc; stroke-width: 1; }
.ucst { fill: #dcdcdc; font: 18px "Liberation Sans", sans-serif; text-anchor: middle; letter-spacing: 0; }
.top { fill: #54565c; font: bold 10px "Liberation Sans", sans-serif; text-anchor: middle; letter-spacing: 0; }
.compass text { fill: #b6b7ba; font: bold 16px "Liberation Sans", sans-serif; text-anchor: middle; letter-spacing: 0; }
.wcs { fill: #a3a6ae; font: 11px "Liberation Sans", sans-serif; text-anchor: middle; letter-spacing: 0; }

.navbar { position: absolute; left: 1242px; top: 173px; width: 32px; height: 212px; background: #565a5e; border-radius: 6px; }
.hscroll { position: absolute; left: 381px; bottom: 0; width: 516px; height: 8px; display: flex; }
.grip { width: 54px; background: #6a6a6a; border-radius: 3px 0 0 0; }
.track { flex: 1; background: #bdbdbd; padding: 5px 0 0 5px; }
.thumb { display: block; width: 15px; height: 3px; border: 1px solid #8a8a8a; border-bottom: 0; border-radius: 2px 2px 0 0; }

.rail { width: 87px; height: 526px; background: #5e5e5e; display: flex; gap: 4px; padding-left: 5px; align-items: flex-start; overflow: hidden; }
.tbar { width: 24px; border: 1px solid #333; background: #5e5e5e; padding: 8px 0 0; flex: none; position: relative; }
.tbar::before { content: ""; position: absolute; left: 4px; top: 2px; width: 14px; height: 3px; background: repeating-linear-gradient(90deg, #2a2a2a 0 1px, transparent 1px 2px); }
.tbar.tall { height: 540px; }
.ti { width: 22px; height: 22px; padding: 3px; }
.ti svg { width: 16px; height: 16px; background: #efe9d9; }
.tsep { height: 2px; margin: 2px 1px; border: 0; background: #e0e0e0; }
.tt { font: bold 7px "Liberation Mono", monospace; text-anchor: middle; fill: #000; letter-spacing: 0; }
.tc { font-family: "Noto Sans CJK SC", sans-serif; text-anchor: middle; fill: #000; letter-spacing: 0; }
.grey { fill: #888; } .redt { fill: #e00; } .navy { fill: #14497f; } .blue2 { fill: #1060d0; } .white { fill: #fff; }

.bottomline { height: 2px; background: #d0d0d0; }
```
